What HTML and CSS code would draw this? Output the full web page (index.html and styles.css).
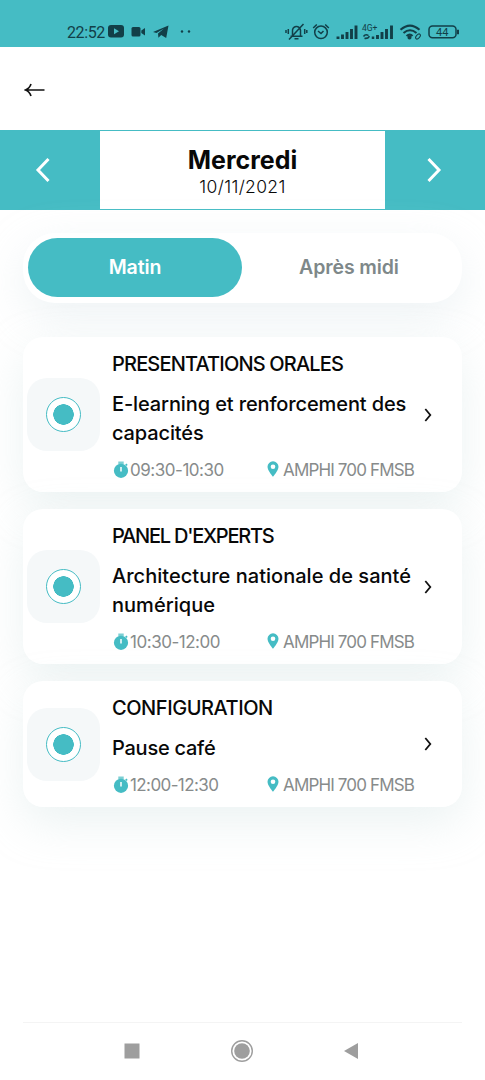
FILE: index.html
```
<!DOCTYPE html>
<html lang="fr">
<head>
<meta charset="utf-8">
<title>Programme</title>
<link rel="stylesheet" href="styles.css">
</head>
<body>
<svg width="0" height="0" class="defs" aria-hidden="true">
  <symbol id="timer" viewBox="0 0 16 18"><path d="M5.300 .5h5.400v2.500H5.300z" fill="#7ccfd3"/><path d="M12.200 3.400l1.300-1 1.200 1.500-1.400 1.200z" fill="#45bcc4"/><circle cx="8" cy="9.800" r="7.100" fill="#45bcc4"/><path d="M8 6v4.600" stroke="#fff" stroke-width="1.500"/></symbol>
  <symbol id="pin" viewBox="0 0 12 16"><path d="M6 .3a5.500 5.500 0 0 0-5.500 5.500C.5 9.600 6 15.700 6 15.700s5.500-6.100 5.500-9.900A5.500 5.500 0 0 0 6 .3z" fill="#45bcc4"/><circle cx="6" cy="5.700" r="2.300" fill="#fff"/></symbol>
  <symbol id="next" viewBox="0 0 8 14"><path d="M1.300 1l5 6-5 6" fill="none" stroke="#111" stroke-width="1.800"/></symbol>
</svg>
<div class="screen">
  <div class="status">
    <span class="clock">22:52</span>
    <svg class="left-icons" width="90" height="20" viewBox="0 0 90 20" fill="#123f48">
      <rect x="1" y="5" width="16" height="12.500" rx="3"/><path d="M7 8.200l5 3-5 3z" fill="#45bcc4"/>
      <rect x="24.500" y="7" width="9" height="9.500" rx="1.500"/><path d="M34.300 10.500l3.700-2.500v7.500l-3.700-2.500z"/>
      <path d="M46 12L61.500 5.500l-2.300 12.500-5-3-2.800 2.800-.4-4.300 6-5-7.500 4.600z"/>
      <circle cx="75" cy="11.500" r="1.200"/><circle cx="82" cy="11.500" r="1.200"/>
    </svg>
    <svg class="right-icons" width="176" height="24" viewBox="285 20 176 24" fill="none" stroke="#123f48" stroke-width="1.500">
      <path d="M290.500 36.300h12M292.500 36v-5a4 4 0 0 1 8-1v6M294.500 38.700h4M303.500 24l-14.500 15.500M288.300 29v5M304.700 29v5M286 30v3M306.800 30v3"/>
      <circle cx="321" cy="32.300" r="6.300"/><path d="M318 31l3 2.500 2.500-2.500M313.200 28l3.600-3.500M328.800 28l-3.600-3.500"/>
      <g stroke-width="2.900"><path d="M338 36.500v2.500M342.500 34.500v4.500M347 32v7M351.500 29v10M356 25.500V39"/><path d="M377.500 35v4M382 32v7M386.500 29v10M391.500 25.500V39"/></g>
      <path d="M363.500 36.500q2-3 5-1M364.500 38.200q3 .8 5-2" stroke-width="1.500"/><path d="M373 36.500V39" stroke-width="2.500"/>
      <text x="362" y="30.500" class="net">4G+</text>
      <path d="M400.500 29.800q9.500-8.500 19 0M403.500 33q6.500-5.500 13 0M406.500 36q3.500-2.800 6 0" stroke-width="2.100"/><circle cx="409.500" cy="37.500" r="1.300" fill="#123f48"/><ellipse cx="418" cy="36.500" rx="3" ry="1.700" transform="rotate(-48 418 36.500)" stroke-width="1"/>
      <rect x="429" y="25.900" width="27" height="11.800" rx="3.500"/><path d="M458 29.700v4.500" stroke-width="2"/>
      <text x="436" y="35.700" class="battery">44</text>
    </svg>
  </div>
  <header class="topbar">
    <svg width="22" height="16" viewBox="0 0 22 16" fill="none" stroke="#111" stroke-width="1.700"><path d="M20.500 8H2M7 2Q5.500 6.500 1.500 8 5.500 9.500 7 14"/></svg>
  </header>
  <section class="datebar">
    <div class="arrow"><svg width="16" height="26" viewBox="0 0 16 26"><path d="M13.500 2L3 13l10.500 11" fill="none" stroke="#fff" stroke-width="3"/></svg></div>
    <div class="date"><span class="day">Mercredi</span><span class="full">10/11/2021</span></div>
    <div class="arrow forward"><svg width="16" height="26" viewBox="0 0 16 26"><path d="M2.500 2L13 13 2.500 24" fill="none" stroke="#fff" stroke-width="3"/></svg></div>
  </section>
  <main class="content">
    <div class="tabs"><div class="tab active"><span>Matin</span></div><div class="tab"><span class="afternoon">Après midi</span></div></div>
    <article class="card">
      <div class="badge"><div class="ring"></div></div>
      <div class="info">
        <div class="kind k1">PRESENTATIONS ORALES</div>
        <div class="title t1">E-learning et renforcement des<br>capacités</div>
        <div class="meta"><span class="time"><svg width="16" height="18"><use href="#timer"/></svg>09:30-10:30</span><span class="place"><svg width="12" height="16"><use href="#pin"/></svg>AMPHI 700 FMSB</span></div>
      </div>
      <svg class="next" width="8" height="14"><use href="#next"/></svg>
    </article>
    <article class="card">
      <div class="badge"><div class="ring"></div></div>
      <div class="info">
        <div class="kind k2">PANEL D'EXPERTS</div>
        <div class="title t2">Architecture nationale de santé<br>numérique</div>
        <div class="meta"><span class="time"><svg width="16" height="18"><use href="#timer"/></svg>10:30-12:00</span><span class="place"><svg width="12" height="16"><use href="#pin"/></svg>AMPHI 700 FMSB</span></div>
      </div>
      <svg class="next" width="8" height="14"><use href="#next"/></svg>
    </article>
    <article class="card">
      <div class="badge"><div class="ring"></div></div>
      <div class="info">
        <div class="kind k3">CONFIGURATION</div>
        <div class="title t3">Pause café</div>
        <div class="meta"><span class="time late"><svg width="16" height="18"><use href="#timer"/></svg>12:00-12:30</span><span class="place"><svg width="12" height="16"><use href="#pin"/></svg>AMPHI 700 FMSB</span></div>
      </div>
      <svg class="next" width="8" height="14"><use href="#next"/></svg>
    </article>
  </main>
  <nav class="navbar">
    <svg width="16" height="16"><rect x=".5" y=".5" width="15" height="15" fill="#9e9e9e"/></svg>
    <svg width="24" height="24"><circle cx="12" cy="12" r="10.300" fill="none" stroke="#9e9e9e" stroke-width="1.400"/><circle cx="12" cy="12" r="7.800" fill="#9e9e9e"/></svg>
    <svg width="16" height="18"><path d="M1 9L15 1v16z" fill="#9e9e9e"/></svg>
  </nav>
</div>
</body>
</html>
```
FILE: styles.css
```
* { box-sizing: border-box; }
body { margin: 0; background: #fff; font-family: Inter, "Liberation Sans", sans-serif; color: #080808; }
.defs { display: none; }
svg { display: block; flex: none; }
.screen { width: 485px; height: 1080px; display: flex; flex-direction: column; overflow: hidden; }
.status { height: 47px; flex: none; background: #45bcc4; display: flex; align-items: flex-start; padding: 20px 24px 0 67px; color: #123f48; }
.clock { font: 400 16px/25px Roboto, sans-serif; width: 40px; letter-spacing: -0.4px; }
.right-icons { margin-left: auto; }
.net { font: 8.500px Roboto, sans-serif; fill: #123f48; stroke: none; }
.battery { font: 400 11px Roboto, sans-serif; fill: #123f48; stroke: none; }
.topbar { height: 83px; flex: none; padding: 35px 24px 0; }
.datebar { height: 80px; flex: none; display: flex; background: #45bcc4; }
.arrow { width: 100px; display: flex; align-items: center; justify-content: center; padding-right: 14px; }
.arrow.forward { padding: 0 2px 0 0; }
.date { flex: 1; margin: 1px 0; background: #fff; display: flex; flex-direction: column; align-items: center; padding-top: 14px; }
.day { font-size: 25px; line-height: 30px; font-weight: 700; }
.full { font-size: 17.500px; line-height: 24px; font-weight: 300; letter-spacing: 0.35px; }
.content { flex: 1; padding: 23px 23px 0; }
.tabs { height: 70px; border-radius: 32px; background: #fff; box-shadow: 0 14px 44px #e6eef0b0; display: flex; padding: 5px 6px 6px 5px; margin-bottom: 34px; }
.tab { flex: 1; border-radius: 30px; display: flex; align-items: center; justify-content: center; padding-bottom: 1px; font-size: 19.500px; font-weight: 600; letter-spacing: -0.1px; color: #7e8889; }
.tab.active { background: #45bcc4; color: #fff; }
.card { position: relative; height: 155px; border-radius: 20px; background: #fff; box-shadow: 0 16px 44px #e4edeeb0; display: flex; align-items: center; padding-left: 4px; margin-bottom: 17px; }
.card:last-child { height: 126px; }
.card:nth-child(2) { z-index: 1; }
.card:nth-child(3) { z-index: 2; }
.card:nth-child(4) { z-index: 3; }
.badge { width: 73px; height: 73px; border-radius: 20px; background: #f5f8f9; display: flex; align-items: center; justify-content: center; }
.ring { width: 35px; height: 35px; border: 1px solid #45bcc4; border-radius: 50%; background: radial-gradient(circle, #45bcc4 10px, #fff 10.500px); }
.info { align-self: flex-start; margin-left: 12px; width: 312px; padding-top: 14px; white-space: nowrap; }
.kind { font-size: 20px; line-height: 26px; font-weight: 500; }
.k1 { letter-spacing: -0.83px; }
.k2 { letter-spacing: -1.230px; }
.k3 { letter-spacing: -0.440px; }
.title { font-size: 20px; line-height: 29px; font-weight: 500; margin-top: 13px; }
.t1 { letter-spacing: -0.120px; }
.t2 { letter-spacing: 0.030px; }
.t3 { letter-spacing: -0.250px; }
.meta { display: flex; align-items: center; font-size: 17px; line-height: 22px; margin-top: 11px; color: #878b8b; }
.time, .place { display: flex; align-items: center; }
.time { width: 155px; gap: 1px; padding-left: 1px; letter-spacing: -0.470px; }
.late { letter-spacing: -0.600px; }
.time svg { margin-top: -1px; }
.place { gap: 4px; letter-spacing: -0.850px; }
.place svg { margin-top: -2px; }
.navbar { height: 58px; flex: none; margin: 0 23px; border-top: 1px solid #f4f4f4; display: flex; align-items: center; justify-content: space-between; padding: 0 103px 2px 101px; }
```
